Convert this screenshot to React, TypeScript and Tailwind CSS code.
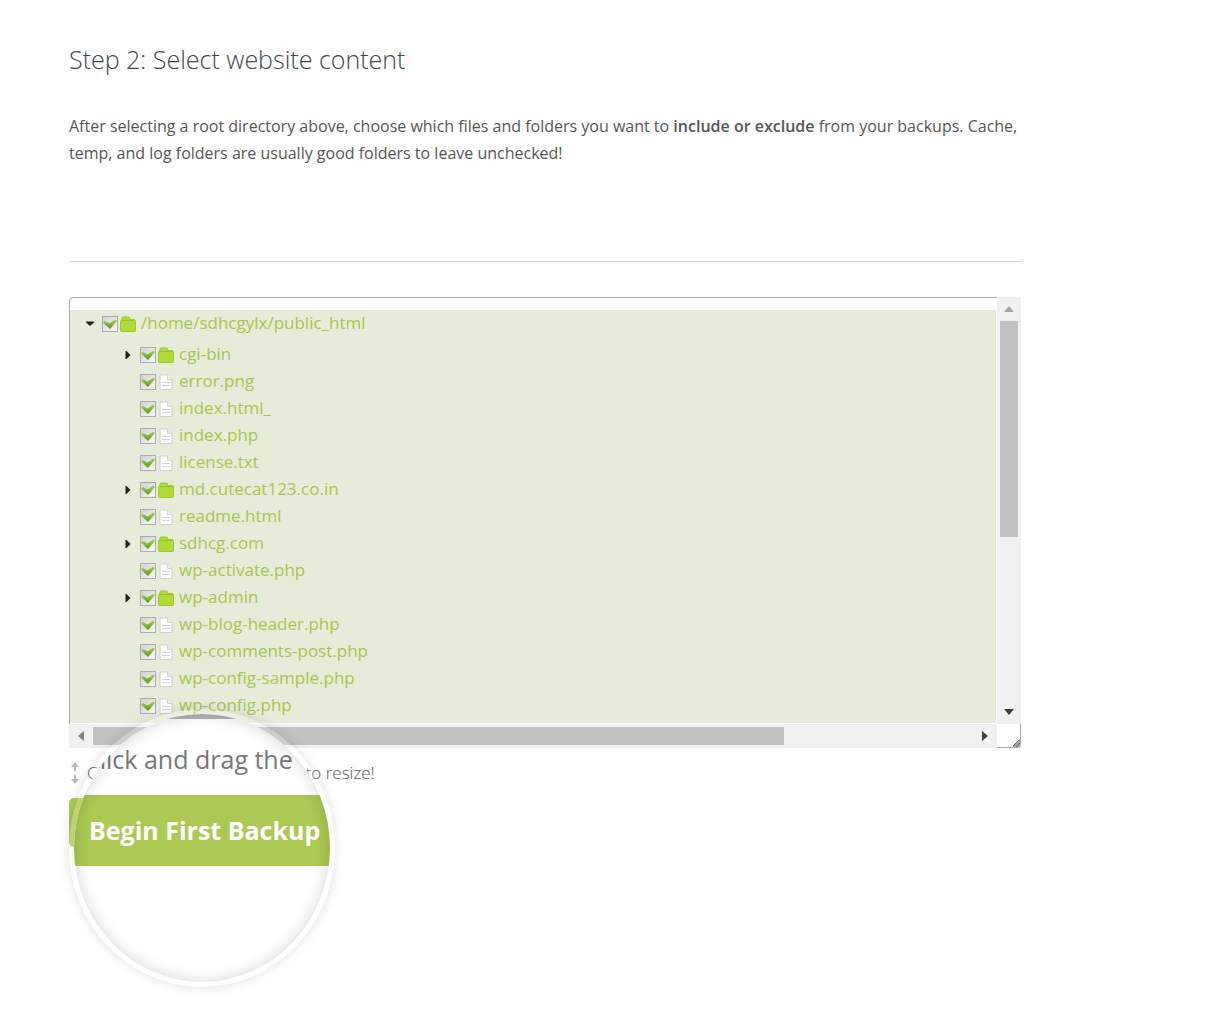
import { useState } from "react";

type Entry = { name: string; kind: "folder" | "file" };

const root = "/home/sdhcgylx/public_html";

const entries: Entry[] = [
    { name: "cgi-bin", kind: "folder" },
    { name: "error.png", kind: "file" },
    { name: "index.html_", kind: "file" },
    { name: "index.php", kind: "file" },
    { name: "license.txt", kind: "file" },
    { name: "md.cutecat123.co.in", kind: "folder" },
    { name: "readme.html", kind: "file" },
    { name: "sdhcg.com", kind: "folder" },
    { name: "wp-activate.php", kind: "file" },
    { name: "wp-admin", kind: "folder" },
    { name: "wp-blog-header.php", kind: "file" },
    { name: "wp-comments-post.php", kind: "file" },
    { name: "wp-config-sample.php", kind: "file" },
    { name: "wp-config.php", kind: "file" },
];

function FolderIcon() {
    return (
        <svg viewBox="0 0 16 16" className="w-4 h-4 shrink-0" aria-hidden="true">
            <path
                d="M1.5 4 L2.5 1 H9 L10 3.5 H14.5 L15.5 5 V14.5 Q15.5 15.5 14.5 15.5 H1.5 Q0.5 15.5 0.5 14.5 V5Z"
                fill="#b0da38"
                stroke="#9aca2a"
            />
            <path d="M1 4.5 H15" stroke="#93c524" />
        </svg>
    );
}

function FileIcon() {
    return (
        <svg viewBox="0 0 16 16" className="w-4 h-4 shrink-0" aria-hidden="true">
            <path d="M2 1 H9.5 L14 5.5 V15.5 H2Z" fill="#fff" stroke="#cfd1cc" strokeLinejoin="round" />
            <path d="M9.5 1 V5.5 H14" fill="#eee" stroke="#d6d7d4" />
            <path d="M4 8.5 H12 M4 11.5 H12" stroke="#d2d4da" />
        </svg>
    );
}

function Toggle({ open, name }: { open: boolean; name: string }) {
    return (
        <button type="button" aria-label={`Expand ${name}`} className="w-4 h-4 flex items-center justify-center">
            <svg viewBox="0 0 10 10" className="w-[10px] h-[10px]" aria-hidden="true">
                <path d={open ? "M1 2.5 H9 V3.5 L5 7 L1 3.5Z" : "M2.5 1 H3.5 L7.5 5 L3.5 9 H2.5Z"} fill="#222" />
            </svg>
        </button>
    );
}

function TreeRow({ name, kind, open = false }: Entry & { open?: boolean }) {
    const [checked, setChecked] = useState(true);
    return (
        <div className="flex items-center h-[27px]">
            <div className="w-5 shrink-0">{kind === "folder" && <Toggle open={open} name={name} />}</div>
            <label className="flex items-center whitespace-nowrap">
                <span className="relative w-4 h-4 mr-[2px]">
                    <input
                        type="checkbox"
                        checked={checked}
                        onChange={(e) => setChecked(e.target.checked)}
                        className="block appearance-none w-4 h-4 border border-[#a9aba8] bg-linear-to-br from-[#d0d2d0] to-[#f8f8f8]"
                    />
                    {checked && (
                        <svg viewBox="0 0 16 16" className="absolute inset-0 pointer-events-none" aria-hidden="true">
                            <defs>
                                <linearGradient id="tick" x1="0" y1="0" x2="0" y2="1">
                                    <stop offset="0" stopColor="#a8d35c" />
                                    <stop offset="1" stopColor="#5a9a10" />
                                </linearGradient>
                            </defs>
                            <path d="M1 6.5 L3 5 L7.5 7.5 L13 3.5 L15 5 L8 13Z" fill="url(#tick)" />
                        </svg>
                    )}
                </span>
                {kind === "folder" ? <FolderIcon /> : <FileIcon />}
                <span className="ml-[5px] leading-6 pb-[2px]">{name}</span>
            </label>
        </div>
    );
}

function Arrow({ d, color = "#404040" }: { d: string; color?: string }) {
    return (
        <svg viewBox="0 0 10 10" className="w-[10px] h-[10px]" aria-hidden="true">
            <path d={d} fill={color} />
        </svg>
    );
}

function FileTree() {
    return (
        <div className="grid grid-cols-[1fr_24px] grid-rows-[427px_24px]">
            <div className="border-t border-l border-[#a9a9a9] rounded-tl-[5px] overflow-hidden pt-3 pr-px pb-px">
                <div className="h-full overflow-hidden bg-[#e7ecda] text-[#a6c64c] text-[17px]">
                    <div className="pl-3 h-[31px]">
                        <TreeRow name={root} kind="folder" open />
                    </div>
                    <div className="pl-[50px]">
                        {entries.map((entry) => (
                            <TreeRow key={entry.name} {...entry} />
                        ))}
                    </div>
                </div>
            </div>

            {/* Vertical scrollbar */}
            <div className="bg-[#f1f1f1] flex flex-col items-center">
                <div className="h-6 flex items-center">
                    <Arrow d="M5 2 L10 8 H0Z" color="#a3a3a3" />
                </div>
                <div className="w-[18px] h-[216px] bg-[#c1c1c1]" />
                <div className="mt-auto h-6 flex items-center">
                    <Arrow d="M0 2 H10 L5 8Z" />
                </div>
            </div>

            {/* Horizontal scrollbar */}
            <div className="bg-[#f1f1f1] flex items-center">
                <div className="w-6 flex justify-center">
                    <Arrow d="M8 0 V10 L2 5Z" color="#808080" />
                </div>
                <div className="flex-1 h-[18px]">
                    <div className="w-[78.5%] h-full bg-[#c1c1c1]" />
                </div>
                <div className="w-6 flex justify-center">
                    <Arrow d="M2 0 V10 L8 5Z" />
                </div>
            </div>

            <div className="bg-white border-b border-r border-[#a9a9a9] rounded-br-sm flex items-end justify-end">
                <svg viewBox="0 0 8 8" className="w-2 h-2" aria-hidden="true">
                    <path d="M0 8 L8 0 V8Z" fill="#aaa" />
                    <path d="M1 7 L7 1 M4 8 L8 4" stroke="#666" />
                </svg>
            </div>
        </div>
    );
}

function Magnifier() {
    return (
        <div
            aria-hidden="true"
            className="absolute -top-[39px] left-0 w-[266px] h-[278px] rounded-[50%] p-[5px] bg-white/20 shadow-[0_0_12px_rgba(0,0,0,0.12)]"
        >
            <div className="relative w-full h-full rounded-[50%] overflow-hidden bg-white whitespace-nowrap">
                <div className="h-[5px] bg-[#b4b4b4]" />
                <div className="pt-6 pl-[10px] h-[76px] text-[25px] leading-8 text-[#777]">Click and drag the</div>
                <div className="h-[71px] leading-[71px] pl-[15px] bg-[#acc953] text-white text-[25px] font-bold">
                    Begin First Backup
                </div>
                <div className="absolute inset-0 rounded-[50%] shadow-[inset_0_0_16px_rgba(0,0,0,0.16)]" />
            </div>
        </div>
    );
}

export default function App() {
    return (
        <main className="min-h-screen bg-white pl-[69px] pr-[209px] pt-10 pb-6 font-['Open_Sans',sans-serif] text-[#555]">
            <h1 className="text-[25px] leading-[38px] font-light text-[#3d474d]">Step 2: Select website content</h1>
            <p className="mt-[35px] text-base leading-[27px]">
                After selecting a root directory above, choose which files and folders you want to{" "}
                <strong className="font-semibold">include or exclude</strong> from your backups. Cache, temp, and log
                folders are usually good folders to leave unchecked!
            </p>
            <hr className="mt-[94px] mb-[35px] border-[#d6d6d6]" />

            <FileTree />

            <div className="relative">
                <div className="flex items-center gap-[6px] h-[50px] text-[17px] font-light">
                    <svg viewBox="0 0 12 24" className="w-3 h-6" aria-hidden="true">
                        <path d="M6 1 L10 6 H7 V10 H5 V6 H2Z M6 23 L10 18 H7 V14 H5 V18 H2Z" fill="#b5b5b5" />
                    </svg>
                    Click and drag the scroll box to resize!
                </div>
                <button
                    type="button"
                    className="block h-[49px] px-6 rounded-[5px] bg-[#acc953] text-white text-[17px] font-bold"
                >
                    Begin First Backup
                </button>
                <Magnifier />
            </div>
        </main>
    );
}
